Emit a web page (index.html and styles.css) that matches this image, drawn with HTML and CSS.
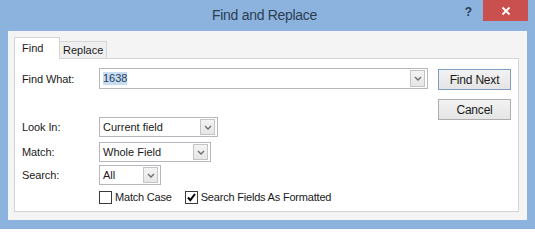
FILE: index.html
```html
<!DOCTYPE html>
<html>
<head>
<meta charset="utf-8">
<link rel="stylesheet" href="styles.css">
</head>
<body>
<div class="window">
  <div class="titlebar">
    <div class="spacer"></div>
    <div class="title">Find and Replace</div>
    <div class="controls">
      <span class="help">?</span>
      <span class="close"><svg width="10" height="10" viewBox="0 0 10 10"><path d="M1.5 1.5 L8.5 8.5 M8.5 1.5 L1.5 8.5" stroke="#fff" stroke-width="1.8" fill="none"/></svg></span>
    </div>
  </div>
  <div class="client">
    <div class="tabs">
      <div class="tab active">Find</div>
      <div class="tab">Replace</div>
    </div>
    <div class="panel">
      <div class="form">
        <div class="row row-what">
          <span class="label">Find What:</span>
          <div class="combo w-what">
            <span class="value"><span class="sel">1638</span></span>
            <span class="drop"><svg width="8" height="5" viewBox="0 0 8 5"><path d="M1 1 L4 4 L7 1" stroke="#6a6a6a" stroke-width="1.3" fill="none"/></svg></span>
          </div>
        </div>
        <div class="row row-look">
          <span class="label">Look In:</span>
          <div class="combo w-look">
            <span class="value">Current field</span>
            <span class="drop"><svg width="8" height="5" viewBox="0 0 8 5"><path d="M1 1 L4 4 L7 1" stroke="#6a6a6a" stroke-width="1.3" fill="none"/></svg></span>
          </div>
        </div>
        <div class="row row-match">
          <span class="label">Match:</span>
          <div class="combo w-match">
            <span class="value">Whole Field</span>
            <span class="drop"><svg width="8" height="5" viewBox="0 0 8 5"><path d="M1 1 L4 4 L7 1" stroke="#6a6a6a" stroke-width="1.3" fill="none"/></svg></span>
          </div>
        </div>
        <div class="row row-search">
          <span class="label">Search:</span>
          <div class="combo w-search">
            <span class="value">All</span>
            <span class="drop"><svg width="8" height="5" viewBox="0 0 8 5"><path d="M1 1 L4 4 L7 1" stroke="#6a6a6a" stroke-width="1.3" fill="none"/></svg></span>
          </div>
        </div>
        <div class="checks">
          <label class="check"><span class="box"></span>Match Case</label>
          <label class="check"><span class="box"><svg width="11" height="11" viewBox="0 0 11 11"><path d="M2 5.5 L4.3 8.2 L9 2" stroke="#000" stroke-width="2" fill="none"/></svg></span>Search Fields As Formatted</label>
        </div>
      </div>
      <div class="buttons">
        <div class="btn default">Find Next</div>
        <div class="btn cancel">Cancel</div>
      </div>
    </div>
  </div>
</div>
</body>
</html>
```

FILE: styles.css
```css
html, body {
  margin: 0;
  padding: 0;
}
body {
  font-family: "Liberation Sans", Arial, sans-serif;
  font-size: 11px;
  color: #1a1a1a;
}
.window {
  width: 535px;
  height: 229px;
  background: #8cb3de;
  box-sizing: border-box;
  padding: 0 8px 9px 8px;
  display: flex;
  flex-direction: column;
}
.titlebar {
  height: 31px;
  margin: 0 -8px;
  display: grid;
  grid-template-columns: 1fr auto 1fr;
  align-items: start;
}
.title {
  padding-top: 7px;
  padding-right: 6px;
  font-size: 14px;
  letter-spacing: -0.3px;
  color: #2c3d52;
  line-height: 16px;
}
.controls {
  justify-self: end;
  display: flex;
  align-items: flex-start;
  margin-right: 7px;
}
.help {
  font-weight: bold;
  font-size: 12px;
  color: #2a3a4e;
  margin-top: 5px;
  margin-right: 11px;
  line-height: 14px;
}
.close {
  width: 45px;
  height: 21px;
  background: #c9504f;
  display: flex;
  align-items: center;
  justify-content: center;
}
.client {
  flex: 1;
  background: #f4f4f4;
  padding: 6px 8px 8px 6px;
  display: flex;
  flex-direction: column;
}
.tabs {
  display: flex;
  align-items: flex-end;
  height: 21px;
  position: relative;
  z-index: 1;
}
.tab {
  box-sizing: border-box;
  border: 1px solid #d5d5d5;
  border-bottom: none;
  background: #efefef;
  height: 17px;
  width: 48px;
  margin-left: -1px;
  padding-left: 3px;
  line-height: 16px;
}
.tab.active {
  background: #fff;
  height: 22px;
  margin-bottom: -1px;
  width: 46px;
  margin-left: 0;
  padding-left: 7px;
  line-height: 21px;
  z-index: 2;
  position: relative;
}
.panel {
  flex: 1;
  box-sizing: border-box;
  border: 1px solid #d5d5d5;
  background: #fff;
  padding: 9px 7px 0 7px;
  display: flex;
  gap: 10px;
}
.form {
  width: 406px;
  display: flex;
  flex-direction: column;
}
.row {
  display: flex;
  align-items: center;
}
.label {
  width: 77px;
  letter-spacing: -0.1px;
}
.row-look { margin-top: 28px; }
.row-match { margin-top: 5px; }
.row-search { margin-top: 3px; }
.combo {
  box-sizing: border-box;
  height: 20px;
  border: 1px solid #b5b7bd;
  background: #fff;
  display: flex;
  align-items: stretch;
  padding: 1px 2px 1px 2px;
}
.w-what { width: 329px; height: 21px; }
.w-look { width: 119px; }
.w-match { width: 112px; }
.w-search { width: 62px; }
.value {
  flex: 1;
  display: flex;
  align-items: center;
  white-space: nowrap;
  padding-left: 1px;
}
.sel {
  background: #c8dcf2;
  color: #23405f;
  line-height: 13px;
}
.drop {
  width: 15px;
  box-sizing: border-box;
  border: 1px solid #c4c4c4;
  background: linear-gradient(#f3f3f3, #e6e6e6);
  display: flex;
  align-items: center;
  justify-content: center;
}
.checks {
  display: flex;
  align-items: center;
  margin-top: 5px;
  margin-left: 77px;
  height: 14px;
  gap: 13px;
}
.check {
  display: flex;
  align-items: center;
  gap: 3px;
  letter-spacing: -0.2px;
}
.box {
  box-sizing: border-box;
  width: 13px;
  height: 13px;
  border: 1px solid #3a3a3a;
  background: #fff;
  display: flex;
  align-items: center;
  justify-content: center;
}
.buttons {
  width: 73px;
  display: flex;
  flex-direction: column;
  padding-top: 1px;
  gap: 9px;
}
.btn {
  box-sizing: border-box;
  height: 21px;
  border: 1px solid #adadad;
  background: linear-gradient(#f2f2f2, #e5e5e5);
  display: flex;
  align-items: center;
  justify-content: center;
  font-size: 12px;
  letter-spacing: -0.2px;
}
.btn.default {
  border-color: #7f9ec4;
}
```
